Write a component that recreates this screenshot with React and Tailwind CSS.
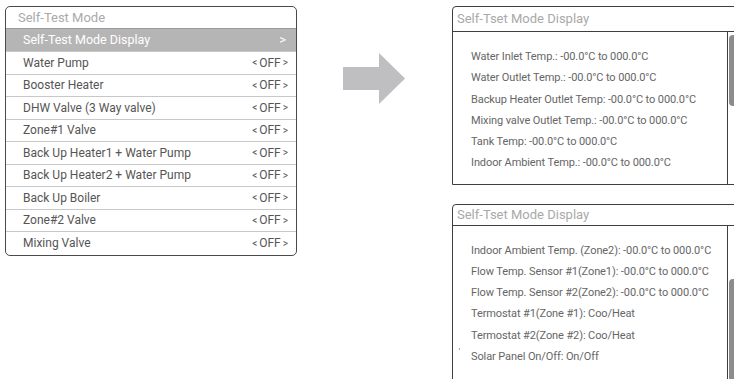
const rows = [
  'Water Pump',
  'Booster Heater',
  'DHW Valve (3 Way valve)',
  'Zone#1 Valve',
  'Back Up Heater1 + Water Pump',
  'Back Up Heater2 + Water Pump',
  'Back Up Boiler',
  'Zone#2 Valve',
  'Mixing Valve',
]

const display1 = [
  'Water Inlet Temp.: -00.0°C to 000.0°C',
  'Water Outlet Temp.: -00.0°C to 000.0°C',
  'Backup Heater Outlet Temp: -00.0°C to 000.0°C',
  'Mixing valve Outlet Temp.: -00.0°C to 000.0°C',
  'Tank Temp: -00.0°C to 000.0°C',
  'Indoor Ambient Temp.: -00.0°C to 000.0°C',
]

const display2 = [
  'Indoor Ambient Temp. (Zone2): -00.0°C to 000.0°C',
  'Flow Temp. Sensor #1(Zone1): -00.0°C to 000.0°C',
  'Flow Temp. Sensor #2(Zone2): -00.0°C to 000.0°C',
  'Termostat #1(Zone #1): Coo/Heat',
  'Termostat #2(Zone #2): Coo/Heat',
  'Solar Panel On/Off: On/Off',
]

const font = { fontFamily: 'Roboto, "Noto Sans", sans-serif' }

function DisplayPanel({ lines, className, scrollClass, dot }) {
  return (
    <div className={`w-[300px] shrink-0 border border-[#3f3f3f] rounded-tl-[4px] flex flex-col ${className}`}>
      <div className="h-[25px] border-b border-[#3f3f3f] pl-[4px] flex items-center text-[13px] text-[#a9a9a9]">
        Self-Tset Mode Display
      </div>
      <div className="flex flex-1">
        <div className="w-[274px] pl-[18px] pt-[14px] text-[11px] leading-[21.3px] tracking-[-0.1px] text-[#666] relative">
          {lines.map((l) => (
            <div key={l} className="whitespace-nowrap">{l}</div>
          ))}
          {dot && <div className="absolute left-[6px] top-[122px] w-[1px] h-[2px] bg-[#aaa]" />}
        </div>
        <div className="border-l border-[#3f3f3f] flex-1 pl-[1px]">
          <div className={`w-[10px] bg-[#8c8c8c] rounded-[4px] ${scrollClass}`} />
        </div>
      </div>
    </div>
  )
}

function Off() {
  return (
    <span className="flex items-center gap-[2px] text-[12px]">
      <span className="text-[10px]">&lt;</span>
      <span>OFF</span>
      <span className="text-[10px]">&gt;</span>
    </span>
  )
}

export default function App() {
  return (
    <div className="w-[734px] h-[379px] overflow-hidden bg-white flex" style={font}>
      <div className="ml-[5px] mt-[6px] w-[292px] shrink-0 self-start border border-[#4a4a4a] rounded-[5px] overflow-hidden">
        <div className="h-[22px] pl-[12px] flex items-center text-[13px] text-[#aaa] border-b border-[#9a9a9a]">
          Self-Test Mode
        </div>
        <div className="h-[23px] bg-[#b5b5b5] flex items-center justify-between pl-[17px] pr-[10px] text-[12.5px] text-white border-b border-[#c8c8c8]">
          <span>Self-Test Mode Display</span>
          <span className="text-[13px]">&gt;</span>
        </div>
        {rows.map((r, i) => (
          <div
            key={r}
            className={`h-[22.5px] flex items-center justify-between pl-[17px] pr-[8px] text-[12px] text-[#555] ${i < rows.length - 1 ? 'border-b border-[#c8c8c8]' : ''}`}
          >
            <span>{r}</span>
            <Off />
          </div>
        ))}
      </div>

      <svg className="ml-[46px] mt-[53px] shrink-0" width="62" height="51" viewBox="0 0 62 51">
        <polygon points="0,14 36,14 36,0 62,25.5 36,51 36,37 0,37" fill="#bfbfc2" />
      </svg>

      <div className="ml-[47px] w-[300px] shrink-0 flex flex-col">
        <DisplayPanel lines={display1} className="mt-[6px] h-[179px]" scrollClass="mt-[3px] h-[71px]" />
        <DisplayPanel lines={display2} className="mt-[19px] h-[190px]" scrollClass="mt-[53px] h-[120px]" dot />
      </div>
    </div>
  )
}
